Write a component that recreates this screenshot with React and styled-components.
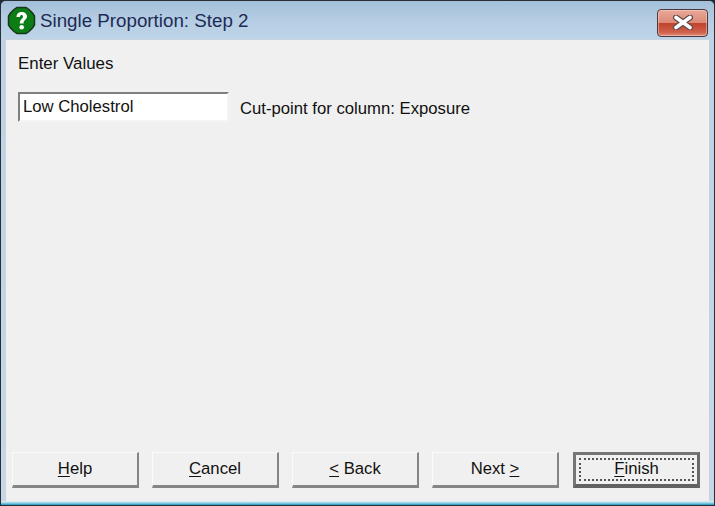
import React from 'react';
import styled, { createGlobalStyle } from 'styled-components';

const GlobalStyle = createGlobalStyle`
	html, body {
		margin: 0;
		padding: 0;
		background: #1c2b33;
	}
`;

const Window = styled.div`
	box-sizing: border-box;
	width: 715px;
	height: 506px;
	display: flex;
	flex-direction: column;
	border: 1px solid #2a2f33;
	border-radius: 6px 6px 0 0;
	background: linear-gradient(to bottom, #a9c4dd 0%, #bcd2e6 8%, #c4d8ea 100%);
	font-family: "Liberation Sans", Arial, sans-serif;
	color: #111;
	overflow: hidden;
`;

const TitleBar = styled.div`
	height: 38px;
	flex: none;
	display: flex;
	align-items: center;
	padding: 0 6px 0 6px;
	background: linear-gradient(to bottom, #a3bfd9 0%, #b4cce2 45%, #bed4e8 100%);
`;

const TitleIcon = styled.svg`
	width: 29px;
	height: 29px;
	flex: none;
	margin-right: 4px;
`;

const Title = styled.div`
	flex: 1;
	font-size: 18.75px;
	color: #1d2a55;
	margin-top: 1px;
`;

const CloseButton = styled.div`
	box-sizing: border-box;
	width: 51px;
	height: 28px;
	margin-top: 5px;
	display: flex;
	align-items: center;
	justify-content: center;
	border: 1px solid #4a3a40;
	border-radius: 4px;
	background: linear-gradient(to bottom, #e9a898 0%, #dd8a78 48%, #c2432c 52%, #d0604a 85%, #dd8e7c 100%);
	box-shadow: inset 0 0 0 1px rgba(255, 225, 215, 0.45);
`;

const Body = styled.div`
	flex: 1;
	display: flex;
	flex-direction: column;
	margin: 0 4px 0 4px;
	padding: 14px 8px 13px 12px;
	background: #f0f0f0;
	border: 1px solid #c9d3db;
	border-bottom: none;
`;

const Heading = styled.div`
	font-size: 16.9px;
	line-height: 20px;
	margin-bottom: 18px;
`;

const FieldRow = styled.div`
	display: flex;
	align-items: center;
	gap: 11px;
`;

const TextField = styled.div`
	box-sizing: border-box;
	width: 211px;
	height: 30px;
	padding: 3px 0 0 3px;
	background: #fff;
	border: 2px solid;
	border-color: #7f7f7f #f4f4f4 #f4f4f4 #7f7f7f;
	font-size: 16.7px;
	line-height: 20px;
`;

const FieldLabel = styled.div`
	font-size: 16.7px;
	margin-top: 4px;
`;

const ButtonRow = styled.div`
	margin-top: auto;
	display: flex;
	gap: 13px;
	margin-left: -6px;
`;

const DialogButton = styled.div`
	box-sizing: border-box;
	width: 127px;
	height: 36px;
	flex: none;
	display: flex;
	align-items: center;
	justify-content: center;
	position: relative;
	font-size: 16.7px;
	background: #f0f0f0;
	border-style: solid;
	border-width: 1px 2px 3px 1px;
	border-color: #fbfbfb #858585 #858585 #fbfbfb;

	u {
		text-underline-offset: 2px;
	}

	${(props) => props.$primary && `
		margin-left: 1px;
		padding-bottom: 2px;
		border-width: 3px 3px 4px 3px;
		border-color: #767676 #6a6a6a #626262 #767676;
	`}
`;

const FocusRing = styled.div`
	position: absolute;
	inset: 3px;
	border: 2px dotted #555;
`;

const BottomEdge = styled.div`
	height: 5px;
	flex: none;
	margin: 0 -1px -1px;
	background: linear-gradient(to bottom, #eef2f4 0%, #8fd0e6 40%, #3aa5c9 70%, #16303c 100%);
`;

const QuestionIcon = () => (
	<TitleIcon viewBox="0 0 29 29">
		<path
			d="M10 1.5 L19 1.5 L22 3.5 L25.5 7 L27.5 10 L27.5 19 L25.5 22 L22 25.5 L19 27.5 L10 27.5 L7 25.5 L3.5 22 L1.5 19 L1.5 10 L3.5 7 L7 3.5 Z"
			fill="#0b7d14"
			stroke="#17371a"
			strokeWidth="1.5"
		/>
		<path
			d="M9.5 11 C9.5 7.5 12 6 14.7 6 C17.8 6 20 7.8 20 10.5 C20 13.5 16.5 14 16.5 17.5 L12.8 17.5 C12.8 13 16 12.5 16 10.7 C16 9.6 15.4 9 14.5 9 C13.6 9 13 9.8 13 11 Z"
			fill="#fff"
		/>
		<circle cx="14.7" cy="21.3" r="2.3" fill="#fff" />
	</TitleIcon>
);

const CloseGlyph = () => (
	<svg width="22" height="15" viewBox="0 0 22 15">
		<path d="M4 2.5 L18 12.5 M18 2.5 L4 12.5" stroke="#5e4a4e" strokeWidth="6" strokeLinecap="round" />
		<path d="M4 2.5 L18 12.5 M18 2.5 L4 12.5" stroke="#fff" strokeWidth="3.6" strokeLinecap="round" />
	</svg>
);

const App = () => {
	return (
		<Window>
			<GlobalStyle />
			<TitleBar>
				<QuestionIcon />
				<Title>Single Proportion: Step 2</Title>
				<CloseButton>
					<CloseGlyph />
				</CloseButton>
			</TitleBar>
			<Body>
				<Heading>Enter Values</Heading>
				<FieldRow>
					<TextField>Low Cholestrol</TextField>
					<FieldLabel>Cut-point for column: Exposure</FieldLabel>
				</FieldRow>
				<ButtonRow>
					<DialogButton><span><u>H</u>elp</span></DialogButton>
					<DialogButton><span><u>C</u>ancel</span></DialogButton>
					<DialogButton><span><u>&lt;</u> Back</span></DialogButton>
					<DialogButton><span>Next <u>&gt;</u></span></DialogButton>
					<DialogButton $primary>
						<FocusRing />
						<span><u>F</u>inish</span>
					</DialogButton>
				</ButtonRow>
			</Body>
			<BottomEdge />
		</Window>
	);
};

export default App;
